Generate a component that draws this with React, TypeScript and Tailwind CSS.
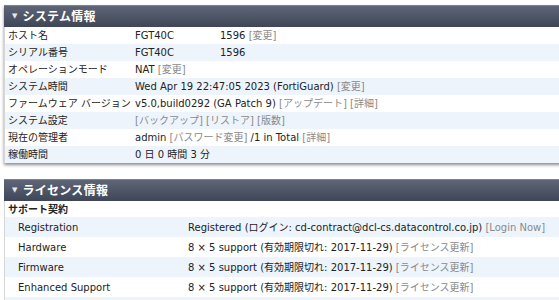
const font = "font-['DejaVu_Sans','Noto_Sans_CJK_JP',sans-serif]";

const Lnk = ({ children }: { children: React.ReactNode }) => (
  <span className="text-[#8a8a8a]">[{children}]</span>
);

const Header = ({ title }: { title: string }) => (
  <div className="flex h-[22px] items-center border-t border-[#7a8293] bg-gradient-to-b from-[#5d6577] to-[#3f4657] pl-[8px] text-white">
    <span className="mr-[5px] text-[7px] leading-none text-[#e4e7ee]">▼</span>
    <span className="text-[12px] font-bold tracking-[0.3px]">{title}</span>
  </div>
);

const sysRows: [string, React.ReactNode][] = [
  [
    'ホスト名',
    <>
      <span className="inline-block w-[85px]">FGT40C</span>1596 <Lnk>変更</Lnk>
    </>,
  ],
  [
    'シリアル番号',
    <>
      <span className="inline-block w-[85px]">FGT40C</span>1596
    </>,
  ],
  ['オペレーションモード', <>NAT <Lnk>変更</Lnk></>],
  ['システム時間', <>Wed Apr 19 22:47:05 2023 (FortiGuard) <Lnk>変更</Lnk></>],
  ['ファームウェア バージョン', <>v5.0,build0292 (GA Patch 9) <Lnk>アップデート</Lnk> <Lnk>詳細</Lnk></>],
  ['システム設定', <><Lnk>バックアップ</Lnk> <Lnk>リストア</Lnk> <Lnk>版数</Lnk></>],
  ['現在の管理者', <>admin <Lnk>パスワード変更</Lnk> /1 in Total <Lnk>詳細</Lnk></>],
  ['稼働時間', <>0 日 0 時間 3 分</>],
];

const licRows: [string, React.ReactNode][] = [
  ['Registration', <>Registered (ログイン: cd-contract@dcl-cs.datacontrol.co.jp) <Lnk>Login Now</Lnk></>],
  ['Hardware', <>8 × 5 support (有効期限切れ: 2017-11-29) <Lnk>ライセンス更新</Lnk></>],
  ['Firmware', <>8 × 5 support (有効期限切れ: 2017-11-29) <Lnk>ライセンス更新</Lnk></>],
  ['Enhanced Support', <>8 × 5 support (有効期限切れ: 2017-11-29) <Lnk>ライセンス更新</Lnk></>],
  ['', <></>],
];

export default function App() {
  return (
    <div className={`h-[300px] w-[559px] overflow-hidden bg-white pt-[5px] pl-[4px] text-[10px] text-[#222] ${font}`}>
      <div className="w-[600px] shadow-[0_2px_3px_rgba(0,0,0,0.45)]">
        <Header title="システム情報" />
        <div className="border-l border-[#d6d6d6]">
          {sysRows.map(([label, value], i) => (
            <div key={i} className={`flex h-[17px] items-center ${i % 2 ? 'bg-[#edf4fc]' : 'bg-white'}`}>
              <div className="w-[130px] shrink-0 whitespace-nowrap pl-[3px]">{label}</div>
              <div className="whitespace-nowrap">{value}</div>
            </div>
          ))}
        </div>
      </div>

      <div className="mt-[16px] w-[600px]">
        <Header title="ライセンス情報" />
        <div className="border-l border-[#d6d6d6]">
          <div className="flex h-[16px] items-center pl-[3px] font-bold">サポート契約</div>
          {licRows.map(([label, value], i) => (
            <div key={i} className={`flex h-[20px] items-center ${i % 2 ? 'bg-white' : 'bg-[#edf4fc]'}`}>
              <div className="w-[183px] shrink-0 pl-[13px]">{label}</div>
              <div className="whitespace-nowrap">{value}</div>
            </div>
          ))}
        </div>
      </div>
    </div>
  );
}
